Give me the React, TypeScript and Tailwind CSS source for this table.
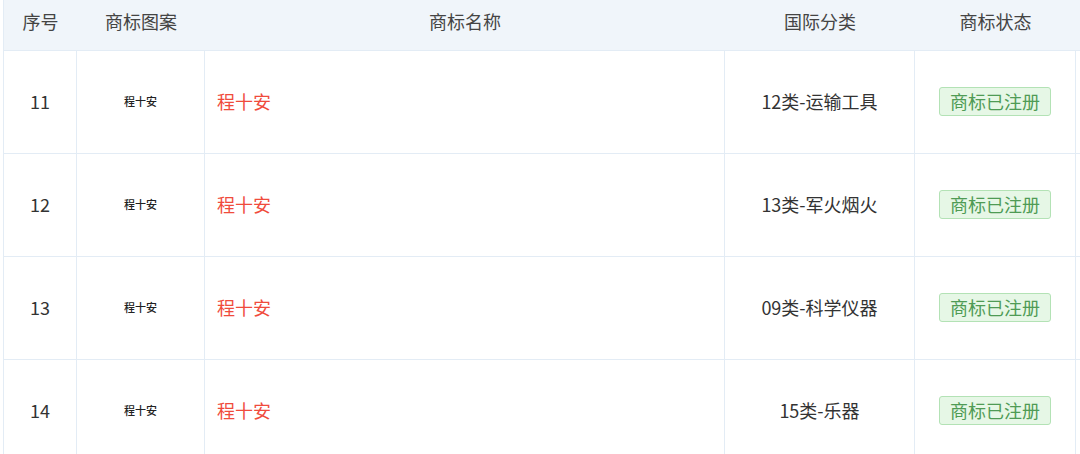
const rows = [
  { no: '11', cls: '12类-运输工具' },
  { no: '12', cls: '13类-军火烟火' },
  { no: '13', cls: '09类-科学仪器' },
  { no: '14', cls: '15类-乐器' },
];

const font = { fontFamily: '"Noto Sans CJK SC", "Noto Sans", sans-serif' };

export default function App() {
  const grid = 'grid grid-cols-[73px_128px_520px_190px_161px_5px]';
  return (
    <div className="w-[1080px] h-[454px] overflow-hidden bg-white pl-[3px]" style={font}>
      <div className="border-l border-[#e3ecf5]">
        <div className={`${grid} h-[51px] bg-[#f0f5fa] border-b border-[#e3ecf5] text-[18px] text-[#444]`}>
          <div className="flex items-center justify-center pb-[8px]">序号</div>
          <div className="flex items-center justify-center pb-[8px]">商标图案</div>
          <div className="flex items-center justify-center pb-[8px]">商标名称</div>
          <div className="flex items-center justify-center pb-[8px]">国际分类</div>
          <div className="flex items-center justify-center pb-[8px]">商标状态</div>
          <div />
        </div>
        {rows.map((r) => (
          <div key={r.no} className={`${grid} h-[103px] border-b border-[#e3ecf5]`}>
            <div className="flex items-center justify-center border-r border-[#e3ecf5] pb-[2px] text-[18px] text-[#333]">
              {r.no}
            </div>
            <div className="flex items-center justify-center border-r border-[#e3ecf5] pb-[2px] text-[11px] font-medium text-[#222]">
              程十安
            </div>
            <div className="flex items-center border-r border-[#e3ecf5] pl-[12px] pb-[2px] text-[18px] text-[#f04b3c]">
              程十安
            </div>
            <div className="flex items-center justify-center border-r border-[#e3ecf5] pb-[2px] text-[18px] text-[#333]">
              {r.cls}
            </div>
            <div className="flex items-center justify-center border-r border-[#e3ecf5] pb-[2px]">
              <span className="flex h-[29px] w-[112px] items-center justify-center rounded-[3px] border border-[#b3e2b5] bg-[#e6f7e6] text-[18px] text-[#4f9b55]">
                商标已注册
              </span>
            </div>
            <div />
          </div>
        ))}
      </div>
    </div>
  );
}
